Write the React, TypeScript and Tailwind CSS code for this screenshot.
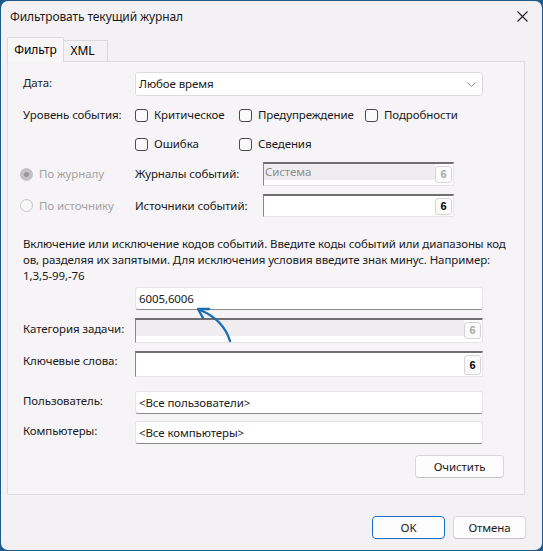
import React from 'react'

const font = "font-['Noto_Sans','Liberation_Sans',sans-serif]"

const DropButton: React.FC<{ disabled?: boolean; tall?: boolean }> = ({ disabled, tall }) => (
  <div
    className={`flex ${tall ? 'h-[20px]' : 'h-[17px]'} w-[17px] shrink-0 items-center justify-center rounded-[3px] border border-[#d6d4d6] bg-[#fbfbfb] font-['Liberation_Sans',sans-serif] text-[11px] font-bold tracking-normal ${
      disabled ? 'text-[#a8a8a8]' : 'text-black'
    }`}
  >
    6
  </div>
)

// classic sunken list box with the Marlett "6" button
const ListBox: React.FC<{
  width: string
  height: string
  value?: string
  disabled?: boolean
  tall?: boolean
}> = ({ width, height, value, disabled, tall }) => (
  <div
    className={`${width} ${height} flex items-start border-t-2 border-l border-r border-b border-t-[#6f6f6f] border-l-[#8a8a8a] border-r-[#e6e4e6] border-b-[#e6e4e6] bg-white`}
  >
    <div
      className={`flex h-[16px] flex-1 items-center pl-px ${
        disabled ? 'bg-[#efedef] text-[#8c8c8c]' : 'bg-white'
      }`}
    >
      {value}
    </div>
    <div className="pt-[2px] pr-px">
      <DropButton disabled={disabled} tall={tall} />
    </div>
  </div>
)

const TextBox: React.FC<{ value?: string }> = ({ value }) => (
  <div className="flex h-[23px] w-[348px] items-center rounded-[3px] border border-[#e6e4e6] border-b-[#8a8a8a] bg-white pl-[3px]">
    {value}
  </div>
)

const Check: React.FC<{ label: string; width?: string }> = ({ label, width = '' }) => (
  <div className={`flex items-center ${width}`}>
    <div className="mr-[6px] h-[13px] w-[13px] rounded-[3px] border border-[#4a4a4a] bg-[#fbfafb]" />
    <span>{label}</span>
  </div>
)

const Radio: React.FC<{ label: string; checked?: boolean }> = ({ label, checked }) => (
  <div className="flex w-[115px] items-center text-[#a3a3a3]">
    <div
      className={`mr-[6px] flex h-[13px] w-[13px] items-center justify-center rounded-full border ${
        checked ? 'border-[#c4c2c4] bg-[#c4c2c4]' : 'border-[#c8c6c8] bg-[#f8f7f8]'
      }`}
    >
      {checked && <div className="h-[5px] w-[5px] rounded-full bg-[#9a989a]" />}
    </div>
    <span>{label}</span>
  </div>
)

const Button: React.FC<{ label: string; primary?: boolean; width: string }> = ({
  label,
  primary,
  width,
}) => (
  <div
    className={`flex h-[23px] ${width} items-center justify-center rounded-[4px] border bg-[#fdfdfd] ${
      primary ? 'border-[#1a6fc4]' : 'border-[#d8d6d8] border-b-[#c4c2c4]'
    }`}
  >
    {label}
  </div>
)

export default function App() {
  return (
    <div
      className={`h-[551px] w-[543px] bg-[#1d5b8c] p-px ${font} text-[11.5px] tracking-[-0.1px] text-[#1a1a1a]`}
    >
      <div className="relative flex h-full w-full flex-col overflow-hidden rounded-[7px] bg-[#f4f1f4]">
        {/* title bar */}
        <div className="flex h-[30px] items-center justify-between pl-[9px] pr-[9px] pt-px">
          <span className="text-[12px]">Фильтровать текущий журнал</span>
          <svg width="11" height="11" viewBox="0 0 11 11" className="mr-[5px]">
            <path d="M0.5 0.5 L10.5 10.5 M10.5 0.5 L0.5 10.5" stroke="#222" strokeWidth="1.1" />
          </svg>
        </div>

        {/* tabs */}
        <div className="ml-[6px] mt-[6px] flex h-[24px] items-end">
          <div className="relative z-10 -mb-px flex h-[25px] w-[57px] items-center justify-center rounded-t-[2px] border border-b-0 border-[#dcdadc] bg-[#f8f7f8] pb-px text-[12px] text-black">
            Фильтр
          </div>
          <div className="flex h-[21px] w-[44px] items-center justify-center border border-l-0 border-b-0 border-[#dcdadc] pr-[6px] text-[12px] text-black">
            XML
          </div>
        </div>

        {/* panel */}
        <div className="ml-[6px] flex h-[434px] w-[518px] flex-col border border-[#dedcde] bg-[#f6f4f6] pl-[15px]">
          <div className="mt-[10px] flex items-start">
            <span className="w-[112px] pt-[2px]">Дата:</span>
            <div className="flex h-[24px] w-[348px] items-center justify-between rounded-[3px] border border-[#dddbdd] bg-white pl-[3px] pr-[6px]">
              <span>Любое время</span>
              <svg width="9" height="5" viewBox="0 0 9 5">
                <path d="M0.5 0.5 L4.5 4.5 L8.5 0.5" stroke="#8a8a8a" fill="none" strokeWidth="1" />
              </svg>
            </div>
          </div>

          <div className="mt-[9px] flex h-[20px] items-center">
            <span className="w-[112px]">Уровень события:</span>
            <Check label="Критическое" width="w-[104px]" />
            <Check label="Предупреждение" width="w-[126px]" />
            <Check label="Подробности" />
          </div>
          <div className="mt-[9px] flex h-[20px] items-center pl-[112px]">
            <Check label="Ошибка" width="w-[104px]" />
            <Check label="Сведения" />
          </div>

          <div className="-ml-[3px] mt-[8px] flex h-[24px] items-center">
            <Radio label="По журналу" checked />
            <span className="w-[128px]">Журналы событий:</span>
            <ListBox width="w-[191px]" height="h-[24px]" value="Система" disabled />
          </div>
          <div className="-ml-[3px] mt-[8px] flex h-[23px] items-center">
            <Radio label="По источнику" />
            <span className="w-[128px]">Источники событий:</span>
            <ListBox width="w-[191px]" height="h-[23px]" />
          </div>

          <p className="mt-[19px] whitespace-nowrap leading-[16px]">
            Включение или исключение кодов событий. Введите коды событий или диапазоны код
            <br />
            ов, разделяя их запятыми. Для исключения условия введите знак минус. Например:
            <br />
            1,3,5-99,-76
          </p>

          <div className="mt-[3px] pl-[112px]">
            <TextBox value="6005,6006" />
          </div>

          <div className="mt-[8px] flex items-start">
            <span className="w-[112px] pt-[2px]">Категория задачи:</span>
            <ListBox width="w-[348px]" height="h-[25px]" disabled />
          </div>
          <div className="mt-[8px] flex items-start">
            <span className="w-[112px] pt-[1px]">Ключевые слова:</span>
            <div className="flex h-[26px] w-[348px] items-start border-t-2 border-l border-r border-b border-t-[#6f6f6f] border-l-[#8a8a8a] border-r-[#e6e4e6] border-b-[#e6e4e6] bg-white">
              <div className="flex-1" />
              <div className="pt-[2px] pr-px">
                <DropButton tall />
              </div>
            </div>
          </div>

          <div className="mt-[14px] flex items-start">
            <span className="w-[112px] pt-[1px]">Пользователь:</span>
            <TextBox value="<Все пользователи>" />
          </div>
          <div className="mt-[7px] flex items-start">
            <span className="w-[112px] pt-[1px]">Компьютеры:</span>
            <TextBox value="<Все компьютеры>" />
          </div>

          <div className="mt-[11px] flex justify-end pr-[20px]">
            <Button label="Очистить" width="w-[89px]" />
          </div>
        </div>

        {/* dialog buttons */}
        <div className="mt-[21px] flex justify-end gap-[8px] pr-[16px]">
          <Button label="OK" primary width="w-[73px]" />
          <Button label="Отмена" width="w-[73px]" />
        </div>

        {/* annotation arrow */}
        <svg
          className="pointer-events-none absolute left-[185px] top-[299px]"
          width="60"
          height="50"
          viewBox="0 0 60 50"
        >
          <path
            d="M44 41 C40 28 31 17 14 10"
            stroke="#1c6cb3"
            strokeWidth="2.4"
            fill="none"
            strokeLinecap="round"
          />
          <path
            d="M23 9 L12 9 L17 18"
            stroke="#1c6cb3"
            strokeWidth="2.4"
            fill="none"
            strokeLinecap="round"
            strokeLinejoin="round"
          />
        </svg>
      </div>
    </div>
  )
}
